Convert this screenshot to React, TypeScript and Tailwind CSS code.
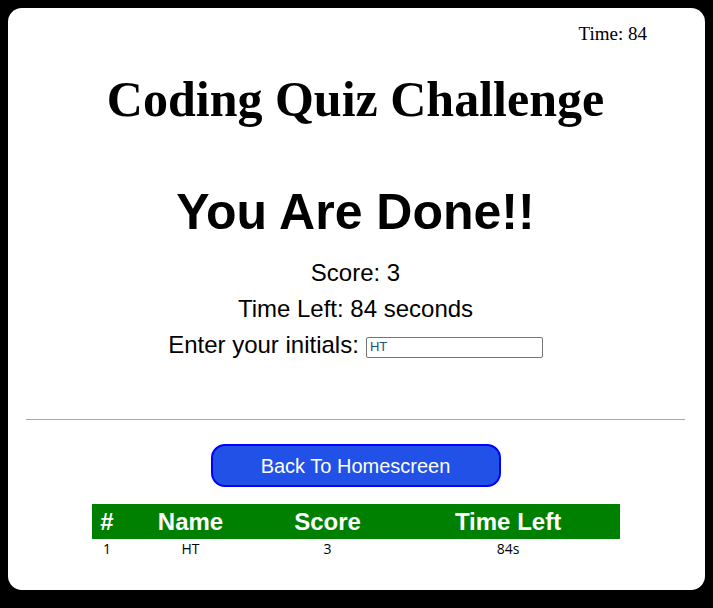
export default function App() {
  const rows = [{ n: 1, name: 'HT', score: 3, time: '84s' }];

  return (
    <div className="min-h-[608px] bg-black p-2 pb-[18px]">
      <div className="bg-white rounded-[14px] h-[582px] flex flex-col pl-[18px] pr-[20px]">
        <div className="flex justify-end pt-[14px] pr-[38px] font-['Liberation_Serif',serif] text-[19px] leading-[24px]">
          Time: 84
        </div>

        <h1 className="text-center font-['Liberation_Serif',serif] font-bold text-[50px] leading-[60px] mt-[23px]">
          Coding Quiz Challenge
        </h1>

        <div className="flex flex-col items-center font-['Liberation_Sans',sans-serif] mt-[54px]">
          <h2 className="font-bold text-[50px] leading-[58px]">You Are Done!!</h2>
          <p className="text-[24px] leading-[36px] mt-[14px]">Score: 3</p>
          <p className="text-[24px] leading-[36px]">Time Left: 84 seconds</p>
          <label className="text-[24px] leading-[36px] flex items-center gap-[7px]">
            Enter your initials:
            <input
              defaultValue="HT"
              className="w-[177px] h-[21px] border border-[#767676] rounded-[2px] px-[3px] text-[13px] text-[#1f4e79] font-['Liberation_Sans',sans-serif] mt-[4px]"
            />
          </label>
        </div>

        <hr className="border-0 border-t border-[#a9a9a9] mt-[56px]" />

        <div className="flex justify-center mt-[24px]">
          <button className="w-[290px] h-[43px] rounded-[14px] border-2 border-[#0000ff] bg-[#2251e8] text-white text-[20px] font-['Liberation_Sans',sans-serif]">
            Back To Homescreen
          </button>
        </div>

        <div className="flex justify-center mt-[17px]">
          <table className="w-[528px] border-collapse font-['Liberation_Sans',sans-serif]">
            <thead>
              <tr className="bg-[#008000] text-white text-[24px] h-[35px] leading-[28px]">
                <th className="w-[31px] font-bold">#</th>
                <th className="w-[136px] font-bold">Name</th>
                <th className="w-[138px] font-bold">Score</th>
                <th className="font-bold">Time Left</th>
              </tr>
            </thead>
            <tbody>
              {rows.map((r) => (
                <tr key={r.n} className="text-[14px] leading-[19px] text-center font-['Open_Sans',sans-serif]">
                  <td>{r.n}</td>
                  <td>{r.name}</td>
                  <td>{r.score}</td>
                  <td>{r.time}</td>
                </tr>
              ))}
            </tbody>
          </table>
        </div>
      </div>
    </div>
  );
}
